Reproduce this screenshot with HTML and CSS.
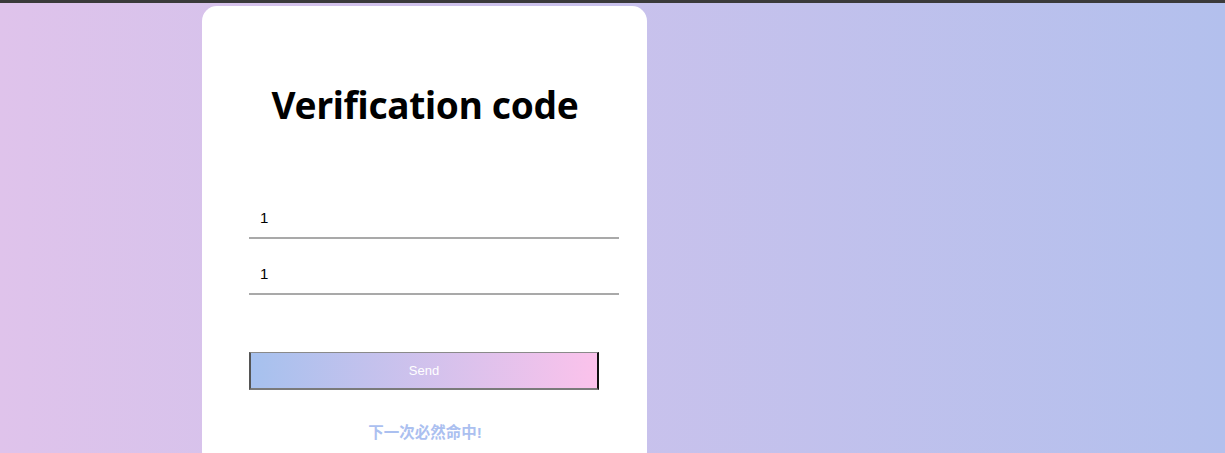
FILE: index.html
```html
<!DOCTYPE html>
<html lang="zh-CN">
<head>
<meta charset="utf-8">
<title>Verification code</title>
<link rel="stylesheet" href="styles.css">
</head>
<body>
<div class="topbar"></div>
<main class="page">
  <section class="card">
    <h1 class="title">Verification code</h1>
    <form class="form">
      <input class="field" type="text" value="1">
      <input class="field" type="text" value="1">
      <button class="send" type="button">Send</button>
    </form>
    <p class="hint">下一次必然命中!</p>
  </section>
</main>
</body>
</html>
```
FILE: styles.css
```css
html, body {
  margin: 0;
  padding: 0;
  height: 100%;
}
body {
  font-family: "Liberation Sans", Arial, sans-serif;
  background: linear-gradient(to right, #dfc3eb, #b3c0ed);
  overflow: hidden;
}
.topbar {
  height: 3px;
  background: #3a3a3a;
}
.page {
  padding: 3px 0 0 202px;
}
.card {
  width: 445px;
  height: 460px;
  background: #fff;
  border-radius: 15px;
  box-sizing: border-box;
  padding: 74px 0 0 47px;
  display: flex;
  flex-direction: column;
}
.title {
  margin: 0;
  width: 352px;
  text-align: center;
  font-family: "Noto Sans", "Open Sans", sans-serif;
  font-weight: 700;
  font-size: 37px;
  line-height: 50px;
  color: #000;
  letter-spacing: -0.25px;
}
.form {
  display: flex;
  flex-direction: column;
  margin-top: 71px;
}
.field {
  width: 370px;
  height: 38px;
  box-sizing: border-box;
  border: none;
  border-bottom: 2px solid #a9a9a9;
  outline: none;
  padding: 0 0 4px 11px;
  font-family: "Liberation Sans", Arial, sans-serif;
  font-size: 15px;
  color: #000;
  background: transparent;
  margin-bottom: 18px;
}
.field:nth-child(2) {
  margin-bottom: 0;
}
.send {
  margin-top: 57px;
  width: 350px;
  height: 38px;
  box-sizing: border-box;
  background: linear-gradient(to right, #a6c1ee, #fbc2eb);
  border-top: 1px solid #8a8a8a;
  border-bottom: 2px solid #7a7a7a;
  border-left: 2px solid #555;
  border-right: 2px solid #111;
  color: #fff;
  font-family: "Liberation Sans", Arial, sans-serif;
  font-size: 13px;
  padding: 0;
}
.hint {
  margin: 33px 0 0 0;
  width: 352px;
  text-align: center;
  color: #abc0f0;
  font-family: "Liberation Sans", "Noto Sans CJK SC", sans-serif;
  font-weight: 700;
  font-size: 15.5px;
  line-height: 20px;
}
```
